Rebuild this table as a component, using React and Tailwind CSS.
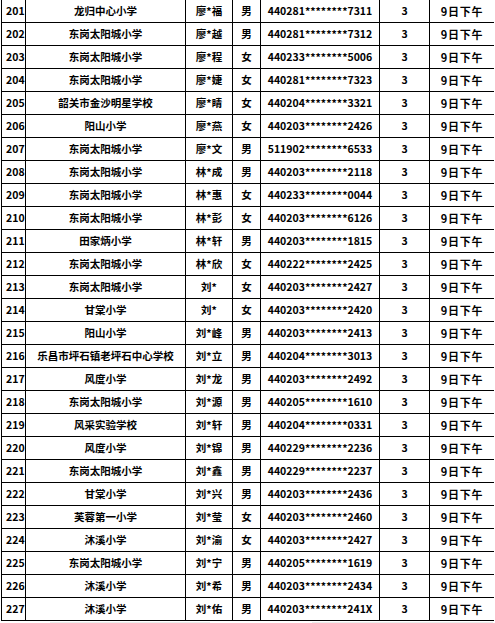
import React from 'react';

const rows = [
  ['201', '龙归中心小学', '廖*福', '男', '440281********7311'],
  ['202', '东岗太阳城小学', '廖*越', '男', '440281********7312'],
  ['203', '东岗太阳城小学', '廖*程', '女', '440233********5006'],
  ['204', '东岗太阳城小学', '廖*婕', '女', '440281********7323'],
  ['205', '韶关市金沙明星学校', '廖*睛', '女', '440204********3321'],
  ['206', '阳山小学', '廖*燕', '女', '440203********2426'],
  ['207', '东岗太阳城小学', '廖*文', '男', '511902********6533'],
  ['208', '东岗太阳城小学', '林*成', '男', '440203********2118'],
  ['209', '东岗太阳城小学', '林*惠', '女', '440233********0044'],
  ['210', '东岗太阳城小学', '林*彭', '女', '440203********6126'],
  ['211', '田家炳小学', '林*轩', '男', '440203********1815'],
  ['212', '东岗太阳城小学', '林*欣', '女', '440222********2425'],
  ['213', '东岗太阳城小学', '刘*', '女', '440203********2427'],
  ['214', '甘棠小学', '刘*', '女', '440203********2420'],
  ['215', '阳山小学', '刘*峰', '男', '440203********2413'],
  ['216', '乐昌市坪石镇老坪石中心学校', '刘*立', '男', '440204********3013'],
  ['217', '风度小学', '刘*龙', '男', '440203********2492'],
  ['218', '东岗太阳城小学', '刘*源', '男', '440205********1610'],
  ['219', '风采实验学校', '刘*轩', '男', '440204********0331'],
  ['220', '风度小学', '刘*锦', '男', '440229********2236'],
  ['221', '东岗太阳城小学', '刘*鑫', '男', '440229********2237'],
  ['222', '甘棠小学', '刘*兴', '男', '440203********2436'],
  ['223', '芙蓉第一小学', '刘*莹', '女', '440203********2460'],
  ['224', '沐溪小学', '刘*渝', '女', '440203********2427'],
  ['225', '东岗太阳城小学', '刘*宁', '男', '440205********1619'],
  ['226', '沐溪小学', '刘*希', '男', '440203********2434'],
  ['227', '沐溪小学', '刘*佑', '男', '440203********241X'],
];

const cell = 'h-[23px] flex items-center border-b border-black';

export default function App() {
  return (
    <div className="w-[495px] h-[623px] bg-white overflow-hidden font-['Noto_Sans_CJK_SC','Noto_Sans',sans-serif] font-bold text-black text-[10.5px] leading-none">
      <div className="ml-px w-[493px] border-l border-black grid grid-cols-[24px_160px_47px_28px_119px_50px_64px]">
        {rows.map(([no, school, name, sex, id]) => (
          <React.Fragment key={no}>
            <div className={`${cell} border-r pl-1`}>{no}</div>
            <div className={`${cell} border-r justify-center`}>{school}</div>
            <div className={`${cell} border-r justify-center`}>{name}</div>
            <div className={`${cell} border-r justify-center`}>{sex}</div>
            <div className={`${cell} border-r justify-center`}>{id}</div>
            <div className={`${cell} border-r justify-center`}>3</div>
            <div className={`${cell} justify-center text-[11px] tracking-[0.8px]`}>9日下午</div>
          </React.Fragment>
        ))}
      </div>
      <div className="flex h-[2px] mt-px">
        <div className="w-[50px]" />
        <div className="w-[160px] bg-[#ececec]" />
        <div className="w-[102px]" />
        <div className="w-[181px] bg-[#ececec]" />
      </div>
    </div>
  );
}
